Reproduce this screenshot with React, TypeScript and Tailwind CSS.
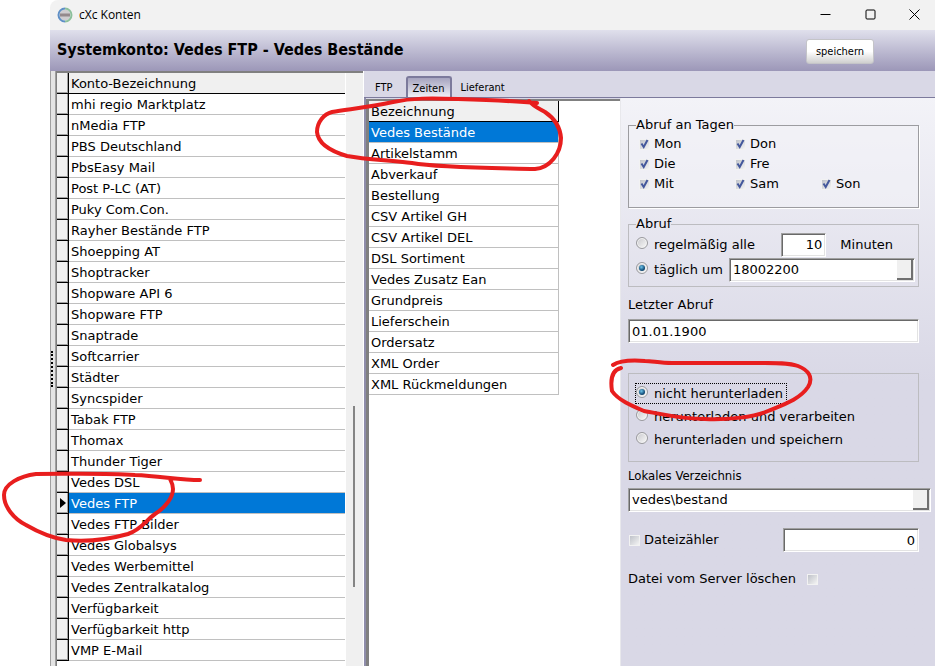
import { useState } from "react";
import type { ReactNode } from "react";

const ACCOUNTS = [
  "mhi regio Marktplatz",
  "nMedia FTP",
  "PBS Deutschland",
  "PbsEasy Mail",
  "Post P-LC (AT)",
  "Puky Com.Con.",
  "Rayher Bestände FTP",
  "Shoepping AT",
  "Shoptracker",
  "Shopware API 6",
  "Shopware FTP",
  "Snaptrade",
  "Softcarrier",
  "Städter",
  "Syncspider",
  "Tabak FTP",
  "Thomax",
  "Thunder Tiger",
  "Vedes DSL",
  "Vedes FTP",
  "Vedes FTP Bilder",
  "Vedes Globalsys",
  "Vedes Werbemittel",
  "Vedes Zentralkatalog",
  "Verfügbarkeit",
  "Verfügbarkeit http",
  "VMP E-Mail",
];

const JOBS = [
  "Vedes Bestände",
  "Artikelstamm",
  "Abverkauf",
  "Bestellung",
  "CSV Artikel GH",
  "CSV Artikel DEL",
  "DSL Sortiment",
  "Vedes Zusatz Ean",
  "Grundpreis",
  "Lieferschein",
  "Ordersatz",
  "XML Order",
  "XML Rückmeldungen",
];

const DAYS = ["Mon", "Don", "", "Die", "Fre", "", "Mit", "Sam", "Son"];

const FIELD =
  "h-[24px] min-w-0 border border-t-[#a0a0a0] border-l-[#a0a0a0] border-r-white border-b-white bg-white px-[3px] shadow-[inset_1px_1px_0_#696969,inset_-1px_-1px_0_#e3e3e3] outline-none";

function TitleBar() {
  return (
    <div className="flex h-[30px] items-center rounded-tl-lg bg-[#f2f2f2] pl-[7px]">
      <svg className="size-[16px]" viewBox="0 0 16 16" fill="none">
        <circle cx="8" cy="8" r="5.500" fill="#cfcdd0" />
        <path d="M8 1.500a6.500 6.500 0 0 0 0 13" stroke="#5f8fc6" strokeWidth="2" />
        <path d="M8 1.500a6.500 6.500 0 0 1 0 13" stroke="#8cc09c" strokeWidth="2" />
        <rect x="3" y="6.500" width="10" height="3" fill="#94898c" />
      </svg>
      <span className="ml-1.5 font-['Open_Sans',sans-serif] text-[12px]">cXc Konten</span>
      <div className="ml-auto flex pb-[2px]">
        <button aria-label="Minimieren" className="flex h-[28px] w-[45px] items-center justify-center">
          <svg className="size-[11px]" viewBox="0 0 11 11" stroke="#000">
            <path d="M.5 5.500h10" />
          </svg>
        </button>
        <button aria-label="Maximieren" className="flex h-[28px] w-[45px] items-center justify-center">
          <svg className="size-[11px]" viewBox="0 0 11 11" stroke="#000" fill="none">
            <rect x="1" y="1" width="9" height="9" rx="1" />
          </svg>
        </button>
        <button aria-label="Schließen" className="flex h-[28px] w-[42px] items-center justify-center">
          <svg className="size-[11px]" viewBox="0 0 11 11" stroke="#000">
            <path d="M.5.5l10 10M10.500.5l-10 10" />
          </svg>
        </button>
      </div>
    </div>
  );
}

function Header() {
  return (
    <div className="flex h-[41px] items-center bg-gradient-to-b from-[#e0e0ec] to-[#9c97b8] pr-[61px] pl-[7px]">
      <h1 className="pb-[2px] font-['DejaVu_Sans_Condensed','DejaVu_Sans',sans-serif] text-[16px] font-bold [font-stretch:condensed]">
        Systemkonto: Vedes FTP - Vedes Bestände
      </h1>
      <button className="mt-0.5 ml-auto h-[25px] w-[68px] rounded-[3px] border border-[#c4c4c8] bg-gradient-to-b from-white from-50% to-[#cfcfcf] font-['DejaVu_Sans_Condensed','DejaVu_Sans',sans-serif] text-[11px] [font-stretch:condensed]">
        speichern
      </button>
    </div>
  );
}

function AccountTable({ selected, onSelect }: { selected: string; onSelect: (name: string) => void }) {
  return (
    <table className="w-full table-fixed border-separate border-spacing-0 text-left">
      <colgroup>
        <col className="w-[12px]" />
        <col />
      </colgroup>
      <thead>
        <tr className="h-[21px]">
          <td className="border-r border-b border-black bg-[#f0f0f0] p-0 shadow-[inset_-1px_-1px_0_#a0a0a0]" />
          <th className="border-b border-black bg-[#f0f0f0] p-0 pt-px pl-[2px] font-normal">Konto-Bezeichnung</th>
        </tr>
      </thead>
      <tbody>
        {ACCOUNTS.map((name) => (
          <tr key={name} className="h-[21px]" onClick={() => onSelect(name)}>
            <td className="border-r border-b border-black bg-[#f0f0f0] p-0 shadow-[inset_-1px_-1px_0_#a0a0a0]">
              {name === selected && (
                <svg className="ml-[3px] h-[10px] w-[6px]" viewBox="0 0 6 10">
                  <path d="M0 0l6 5-6 5z" />
                </svg>
              )}
            </td>
            <td
              className={
                name === selected
                  ? "border-b border-[#c0c0c0] bg-[#0078d7] p-0 pt-px pl-[2px] text-white"
                  : "border-b border-[#c0c0c0] bg-white p-0 pt-px pl-[2px]"
              }
            >
              {name}
            </td>
          </tr>
        ))}
      </tbody>
    </table>
  );
}

function JobTable({ selected, onSelect }: { selected: string; onSelect: (name: string) => void }) {
  return (
    <table className="w-[190px] table-fixed border-separate border-spacing-0 text-left">
      <thead>
        <tr className="h-[21px]">
          <th className="border-r border-b border-black bg-[#f0f0f0] p-0 pt-px pl-[2px] font-normal">Bezeichnung</th>
        </tr>
      </thead>
      <tbody>
        {JOBS.map((name) => (
          <tr key={name} className="h-[21px]" onClick={() => onSelect(name)}>
            <td
              className={
                name === selected
                  ? "border-r border-b border-[#c0c0c0] bg-[#0078d7] p-0 pt-px pl-[2px] text-white"
                  : "border-r border-b border-[#c0c0c0] p-0 pt-px pl-[2px]"
              }
            >
              {name}
            </td>
          </tr>
        ))}
      </tbody>
    </table>
  );
}

function CheckBox({ id, defaultChecked }: { id: string; defaultChecked?: boolean }) {
  return (
    <span className="relative flex size-[11px] shrink-0">
      <input
        id={id}
        type="checkbox"
        defaultChecked={defaultChecked}
        className="peer size-[11px] appearance-none border border-[#f2f2f2] bg-gradient-to-br from-[#bfc2c9] to-[#f4f4f4]"
      />
      <svg
        className="pointer-events-none absolute inset-0 hidden size-[11px] peer-checked:block"
        viewBox="0 0 11 11"
        fill="none"
        stroke="#44589c"
        strokeWidth="2"
      >
        <path d="M2.500 4.500l2.200 3.500L8.500 1" />
      </svg>
    </span>
  );
}

function RadioRow({ id, name, checked, children }: { id: string; name: string; checked?: boolean; children: ReactNode }) {
  return (
    <>
      <span className="relative mb-[3px] flex size-[12px] shrink-0">
        <input
          id={id}
          type="radio"
          name={name}
          defaultChecked={checked}
          className="peer size-[12px] appearance-none rounded-full border border-[#9a9a9e] bg-gradient-to-br from-[#c8c8cc] to-[#fafafa] shadow-[inset_0_0_0_1px_#f4f4f4] outline-none"
        />
        <span className="pointer-events-none absolute inset-[3px] hidden rounded-full bg-[radial-gradient(circle_at_40%_35%,#6fc4ea,#14507c_60%,#0c2c48)] peer-checked:block" />
      </span>
      <label htmlFor={id} className="ml-1.5 whitespace-nowrap">
        {children}
      </label>
    </>
  );
}

function ButtonField({ id, label, value }: { id: string; label: string; value: string }) {
  return (
    <div className={`${FIELD} flex grow py-px pr-px`}>
      <input id={id} aria-label={label} defaultValue={value} className="w-full min-w-0 grow outline-none" />
      <button
        type="button"
        aria-label={`${label} auswählen`}
        className="w-[16px] shrink-0 border-r-2 border-b-2 border-[#707070] bg-[#f0f0f0]"
      />
    </div>
  );
}

function ScheduleForm() {
  return (
    <form className="min-w-0 grow border-l border-[#e8e8ec] bg-gradient-to-b from-[#f3f3f8] to-[#d9d8e6] to-50% pt-[18px] pl-[7px]">
      <fieldset className="mr-4 h-[92px] min-w-0 border border-[#9c9ca0] bg-[#f2f2f7]/60 px-[10px] shadow-[1px_1px_0_#fff]">
        <legend className="-ml-[3px] leading-[18px]">Abruf an Tagen</legend>
        <div className="grid grid-cols-[96px_86px_auto] leading-[20px]">
          {DAYS.map((day, i) =>
            day ? (
              <div key={day} className="flex items-center gap-1">
                <CheckBox id={`day-${day}`} defaultChecked />
                <label htmlFor={`day-${day}`}>{day}</label>
              </div>
            ) : (
              <div key={i} />
            )
          )}
        </div>
      </fieldset>

      <fieldset className="mt-2 mr-4 h-[71px] min-w-0 border border-[#bcbcc0] px-[7px]">
        <legend className="leading-[16px]">Abruf</legend>
        <div className="flex h-[25px] items-center">
          <RadioRow id="interval" name="schedule">regelmäßig alle</RadioRow>
          <input aria-label="Intervall" defaultValue="10" className={`${FIELD} ml-auto w-[45px] text-right`} />
          <span className="mr-[18px] ml-[14px]">Minuten</span>
        </div>
        <div className="-mr-1 flex h-[25px] items-center">
          <RadioRow id="daily" name="schedule" checked>täglich um</RadioRow>
          <div className="ml-1.5 flex min-w-0 grow">
            <ButtonField id="daily-time" label="Uhrzeiten" value="18002200" />
          </div>
        </div>
      </fieldset>

      <label htmlFor="last-run" className="mt-2 block leading-[20px]">
        Letzter Abruf
      </label>
      <div className="mt-1 mr-4 flex">
        <input id="last-run" defaultValue="01.01.1900" className={`${FIELD} grow`} />
      </div>

      <fieldset className="mt-[30px] mr-4 h-[89px] min-w-0 border border-[#bcbcc0] px-[7px] pt-2">
        <div className="flex h-[23px] items-center">
          <div className="-m-px flex h-[21px] items-center border border-dotted border-black pr-[3px]">
            <RadioRow id="dl-none" name="download" checked>nicht herunterladen</RadioRow>
          </div>
        </div>
        <div className="flex h-[23px] items-center">
          <RadioRow id="dl-process" name="download">herunterladen und verarbeiten</RadioRow>
        </div>
        <div className="flex h-[23px] items-center">
          <RadioRow id="dl-save" name="download">herunterladen und speichern</RadioRow>
        </div>
      </fieldset>

      <label
        htmlFor="local-dir"
        className="mt-1 block font-['DejaVu_Sans_Condensed','DejaVu_Sans',sans-serif] text-[13px] leading-[20px] [font-stretch:condensed]"
      >
        Lokales Verzeichnis
      </label>
      <div className="mt-0.5 mr-1 flex">
        <ButtonField id="local-dir" label="Lokales Verzeichnis" value="vedes\bestand" />
      </div>

      <div className="mt-4 mr-4 flex items-center">
        <span className="ml-px flex items-center gap-1">
          <CheckBox id="counter" />
          <label htmlFor="counter">Dateizähler</label>
        </span>
        <input aria-label="Dateizähler Wert" defaultValue="0" className={`${FIELD} ml-auto w-[136px] text-right`} />
      </div>

      <div className="mt-[18px] flex items-center gap-[11px]">
        <label htmlFor="delete-remote">Datei vom Server löschen</label>
        <CheckBox id="delete-remote" />
      </div>
    </form>
  );
}

function Tabs() {
  const tab =
    "h-[21px] pt-[3px] leading-[14px] font-['DejaVu_Sans_Condensed','DejaVu_Sans',sans-serif] text-[11px] [font-stretch:condensed]";
  return (
    <div role="tablist" className="flex h-[27px] items-end border-b border-[#7c7a9c] bg-[#d9d8e6] pl-[11px]">
      <button type="button" role="tab" aria-selected={false} className={tab}>
        FTP
      </button>
      <button
        type="button"
        role="tab"
        aria-selected
        className={`${tab} ml-[13px] w-[46px] rounded-t-[3px] border-2 border-b-0 border-[#7c7a9c] bg-gradient-to-b from-[#a6a4bf] to-[#f0f0f6]`}
      >
        Zeiten
      </button>
      <button type="button" role="tab" aria-selected={false} className={`${tab} ml-[9px]`}>
        Lieferant
      </button>
    </div>
  );
}

// Red pen strokes drawn over the window
function PenMarks() {
  return (
    <svg
      className="pointer-events-none absolute top-0 left-0 h-[666px] w-[935px]"
      viewBox="0 0 935 666"
      fill="none"
      stroke="#e81e1e"
      strokeWidth="4"
      strokeLinecap="round"
      strokeLinejoin="round"
    >
      <path d="M537 103C515 101 490 100 458 99C430 98 412 98 393 102C370 107 350 109 332 112C324 114 317 122 317 132C318 143 330 151 347 156C368 160 392 160 412 163C440 168 500 168 535 169C550 168 561 153 561 138C560 126 554 118 545 112C538 108 533 106 529 101" />
      <path d="M200 480C180 480 160 476 135 475C105 473 70 474 36 474C20 476 4 484 4 495C4 507 14 519 26 525C38 532 52 538 66 540C86 542 110 539 128 534C142 529 145 521 155 514C166 507 173 497 173 489C173 484 171 481 170 479" />
      <path d="M621 368C612 370 610 378 612 391C618 400 632 406 644 411C662 414 680 419 705 419C728 420 755 417 768 411C785 404 800 399 808 387C814 377 808 370 798 366C788 362 770 363 750 363H672C660 363 652 361 645 361C632 360 619 361 613 365" />
    </svg>
  );
}

export default function App() {
  const [account, setAccount] = useState("Vedes FTP");
  const [job, setJob] = useState("Vedes Bestände");

  return (
    <div className="relative min-h-screen overflow-hidden bg-white pl-[50px] font-['DejaVu_Sans',sans-serif] text-[13px] leading-[18px] text-black">
      <div className="flex min-h-screen flex-col">
        <TitleBar />
        <Header />
        <div className="flex grow">
          <div className="flex w-[6px] shrink-0 items-center border-x border-[#a0a0a0] bg-[#e4e4e4]">
            <div className="h-[36px] w-[3px] border-l-2 border-dotted border-black" />
          </div>
          <div className="flex w-[307px] shrink-0 border-t-2 border-l border-[#808080] bg-white">
            <div className="min-w-0 grow">
              <AccountTable selected={account} onSelect={setAccount} />
            </div>
            <div className="ml-px w-[17px] shrink-0 bg-[#f0f0f0]">
              <div className="mt-[333px] ml-[7px] h-[181px] w-[2px] bg-[#858585]" />
            </div>
          </div>
          <div className="flex min-w-0 grow flex-col border-l border-white bg-[#d9d8e6]">
            <Tabs />
            <div className="flex grow border-l-2 border-[#8f8dab]">
              <div className="mt-px w-[254px] shrink-0 border-t-2 border-l-[3px] border-[#808080] bg-white">
                <JobTable selected={job} onSelect={setJob} />
              </div>
              <ScheduleForm />
            </div>
          </div>
        </div>
      </div>
      <PenMarks />
    </div>
  );
}
